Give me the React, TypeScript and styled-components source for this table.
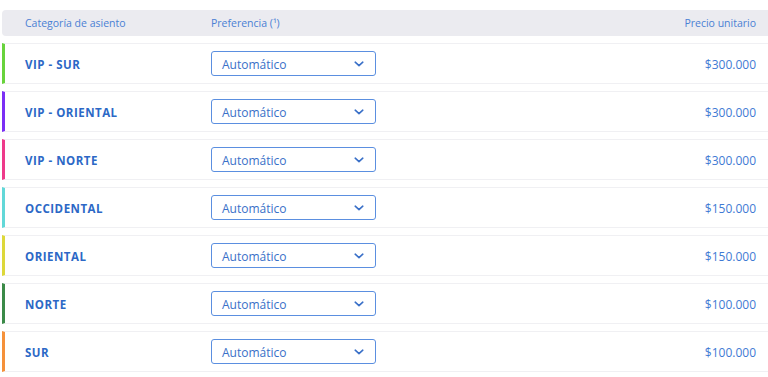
import React from "react";
import styled, { createGlobalStyle } from "styled-components";

const Global = createGlobalStyle`
  html, body { margin: 0; padding: 0; background: #ffffff; }
  body { font-family: "Open Sans", "Noto Sans", sans-serif; }
`;

const Wrap = styled.div`
  padding: 10px 0 0 2px;
  display: flex;
  flex-direction: column;
  gap: 7px;
`;

const Header = styled.div`
  display: grid;
  grid-template-columns: 186px 1fr 200px;
  align-items: center;
  height: 26px;
  background: #ebebf0;
  border-radius: 4px 0 0 4px;
  padding: 0 12px 0 23px;
  color: #4a80d4;
  font-size: 10.5px;
`;

const HeadCell = styled.div<{ $right?: boolean }>`
  text-align: ${(p) => (p.$right ? "right" : "left")};
`;

const Rows = styled.div`
  display: flex;
  flex-direction: column;
  gap: 7px;
`;

const Row = styled.div<{ $color: string }>`
  display: grid;
  grid-template-columns: 186px 1fr 200px;
  align-items: center;
  height: 39px;
  border-top: 1px solid #f0f0f3;
  border-bottom: 1px solid #f0f0f3;
  border-left: 3px solid ${(p) => p.$color};
  padding: 0 12px 0 20px;
`;

const Category = styled.div`
  color: #2c68c6;
  font-weight: 700;
  font-size: 11.5px;
  letter-spacing: 0.5px;
  padding-top: 1px;
`;

const Select = styled.div`
  width: 165px;
  height: 25px;
  box-sizing: border-box;
  border: 1px solid #5b8fe0;
  border-radius: 3px;
  display: flex;
  align-items: center;
  justify-content: space-between;
  padding: 1px 11px 0 10px;
  color: #3a70c8;
  font-size: 12px;
`;

const Price = styled.div`
  text-align: right;
  color: #3f7ad4;
  font-size: 12px;
  padding-top: 1px;
`;

const Chevron = () => (
  <svg width="10" height="6" viewBox="0 0 10 6" fill="none">
    <path d="M1.2 1.2 L5 4.6 L8.8 1.2" stroke="#3a70c8" strokeWidth="1.6" strokeLinecap="round" strokeLinejoin="round" />
  </svg>
);

const data = [
  { name: "VIP - SUR", color: "#68d33c", price: "$300.000" },
  { name: "VIP - ORIENTAL", color: "#7b2ff5", price: "$300.000" },
  { name: "VIP - NORTE", color: "#ee3a8a", price: "$300.000" },
  { name: "OCCIDENTAL", color: "#62d8d8", price: "$150.000" },
  { name: "ORIENTAL", color: "#ddd83a", price: "$150.000" },
  { name: "NORTE", color: "#3b8a48", price: "$100.000" },
  { name: "SUR", color: "#f5913a", price: "$100.000" },
];

export default function App() {
  return (
    <>
      <Global />
      <Wrap>
        <Header>
          <HeadCell>Categoría de asiento</HeadCell>
          <HeadCell>Preferencia (¹)</HeadCell>
          <HeadCell $right>Precio unitario</HeadCell>
        </Header>
        <Rows>
          {data.map((d) => (
            <Row key={d.name} $color={d.color}>
              <Category>{d.name}</Category>
              <Select>
                <span>Automático</span>
                <Chevron />
              </Select>
              <Price>{d.price}</Price>
            </Row>
          ))}
        </Rows>
      </Wrap>
    </>
  );
}
